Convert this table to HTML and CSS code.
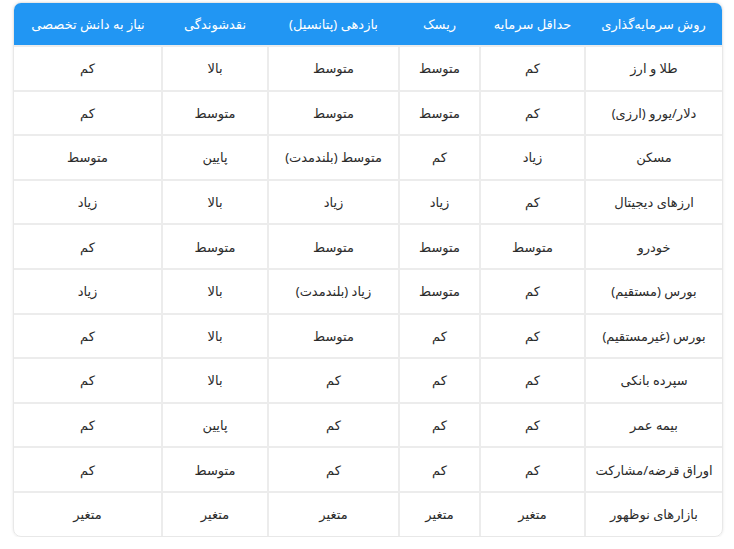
FILE: index.html
```html
<!DOCTYPE html>
<html lang="fa" dir="rtl">
<head>
<meta charset="utf-8">
<link rel="stylesheet" href="styles.css">
</head>
<body>
<div class="wrap">
<table class="grid">
<colgroup><col class="c1"><col class="c2"><col class="c3"><col class="c4"><col class="c5"><col class="c6"></colgroup>
<thead>
<tr><th>روش سرمایه‌گذاری</th><th>حداقل سرمایه</th><th>ریسک</th><th>بازدهی (پتانسیل)</th><th>نقدشوندگی</th><th>نیاز به دانش تخصصی</th></tr>
</thead>
<tbody>
<tr><td>طلا و ارز</td><td>کم</td><td>متوسط</td><td>متوسط</td><td>بالا</td><td>کم</td></tr>
<tr><td>دلار/یورو (ارزی)</td><td>کم</td><td>متوسط</td><td>متوسط</td><td>متوسط</td><td>کم</td></tr>
<tr><td>مسکن</td><td>زیاد</td><td>کم</td><td>متوسط (بلندمدت)</td><td>پایین</td><td>متوسط</td></tr>
<tr><td>ارزهای دیجیتال</td><td>کم</td><td>زیاد</td><td>زیاد</td><td>بالا</td><td>زیاد</td></tr>
<tr><td>خودرو</td><td>متوسط</td><td>متوسط</td><td>متوسط</td><td>متوسط</td><td>کم</td></tr>
<tr><td>بورس (مستقیم)</td><td>کم</td><td>متوسط</td><td>زیاد (بلندمدت)</td><td>بالا</td><td>زیاد</td></tr>
<tr><td>بورس (غیرمستقیم)</td><td>کم</td><td>کم</td><td>متوسط</td><td>بالا</td><td>کم</td></tr>
<tr><td>سپرده بانکی</td><td>کم</td><td>کم</td><td>کم</td><td>بالا</td><td>کم</td></tr>
<tr><td>بیمه عمر</td><td>کم</td><td>کم</td><td>کم</td><td>پایین</td><td>کم</td></tr>
<tr><td>اوراق قرضه/مشارکت</td><td>کم</td><td>کم</td><td>کم</td><td>متوسط</td><td>کم</td></tr>
<tr><td>بازارهای نوظهور</td><td>متغیر</td><td>متغیر</td><td>متغیر</td><td>متغیر</td><td>متغیر</td></tr>
</tbody>
</table>
</div>
</body>
</html>
```
FILE: styles.css
```css
html, body {
  margin: 0;
  padding: 0;
  background: #ffffff;
}
body {
  padding: 2px 11px 0 13px;
  font-family: "Noto Sans", "DejaVu Sans", sans-serif;
}
.wrap {
  width: 710px;
  border-radius: 8px;
  overflow: hidden;
  box-shadow: 0 0 3px rgba(0,0,0,0.10);
  border: 1px solid #e8e8e8;
  box-sizing: border-box;
}
.grid {
  width: 100%;
  border-collapse: collapse;
  table-layout: fixed;
  font-size: 13px;
  color: #2b2b2b;
}
.grid th {
  background: #2196f3;
  color: #fff;
  font-weight: normal;
  height: 42px;
  padding: 0 4px;
  text-align: center;
  border: none;
}
.grid td {
  height: 42.6px;
  padding: 0 4px;
  text-align: center;
  border: 2px solid #ececec;
}
.grid tr td:first-child { border-right: none; }
.grid tr td:last-child { border-left: none; }
.grid tbody tr:last-child td { border-bottom: none; }
.c1 { width: 137px; }
.c2 { width: 105px; }
.c3 { width: 81px; }
.c4 { width: 131px; }
.c5 { width: 106px; }
.c6 { width: 148px; }
```
